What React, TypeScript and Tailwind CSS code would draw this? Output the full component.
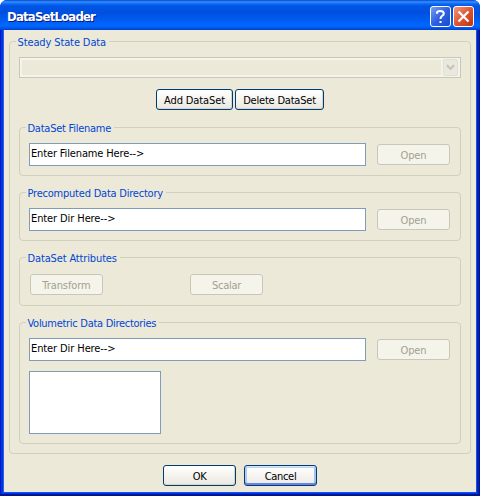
import type { ReactNode } from "react";

function Group({ title, className, tracking, children }: { title: string; className: string; tracking: string; children: ReactNode }) {
  return (
    <section className={`flex flex-col rounded-[4px] border border-[#d0d0bf] ${className}`}>
      <div className="-mt-[7px] flex h-[14px] shrink-0 pl-[6px]">
        <span className={`whitespace-nowrap bg-[#ece9d8] pl-[1.5px] pr-[3px] leading-[15px] text-[#0046d5] ${tracking}`}>{title}</span>
      </div>
      {children}
    </section>
  );
}

function XpButton({ label, width = "w-[73px]", focused = false, disabled = false, tracking = "" }: { label: string; width?: string; focused?: boolean; disabled?: boolean; tracking?: string }) {
  const look = disabled
    ? "border-[#c9c7ba] bg-[#f5f4ea] text-[#a1a192]"
    : focused
      ? "border-[#003c74] bg-linear-to-b from-white to-[#eceae3] text-black shadow-[inset_0_1px_0_#cee7ff,inset_0_-2px_0_#6982ee,inset_2px_0_0_#b1cbf5,inset_-2px_0_0_#a5c0f2,inset_0_2px_0_#bcd4f6]"
      : "border-[#003c74] bg-linear-to-b from-white via-[#f5f4ef] to-[#e9e7df] text-black shadow-[inset_-1px_-1px_0_#d9d4ca]";
  return (
    <button disabled={disabled} className={`flex h-[21px] shrink-0 items-start justify-center whitespace-nowrap rounded-[3px] border pt-[3px] leading-[15px] ${width} ${look} ${tracking}`}>
      {label}
    </button>
  );
}

function PathRow({ text, tracking }: { text: string; tracking: string }) {
  return (
    <div className="mt-[8px] flex items-center gap-[11px] pl-[9px]">
      <div className={`flex h-[23px] w-[337px] items-start whitespace-nowrap border border-[#7f9db9] bg-white pl-px pt-[2px] leading-[15px] text-black ${tracking}`}>{text}</div>
      <XpButton label="Open" disabled tracking="tracking-[-0.1px]" />
    </div>
  );
}

export default function App() {
  return (
    <div className="h-[496px] w-[480px] bg-white font-['DejaVu_Sans_Condensed','DejaVu_Sans',sans-serif] text-[11px] [font-stretch:condensed]">
      <div className="flex h-full flex-col overflow-hidden rounded-t-[7px] bg-[#0831d9]">
        <header className="flex h-[30px] shrink-0 items-start bg-[linear-gradient(180deg,#0046d0_0,#3c94ff_2px,#1674f7_3px,#0055e5_6px,#0050df_13px,#005cf2_20px,#0068ff_26px,#0058e8_28px,#003dce_30px)] pl-[7px] pr-[6px]">
          <h1 className="mt-[9px] flex-1 whitespace-nowrap text-[13px] font-bold leading-[16px] tracking-[-0.8px] text-white [text-shadow:1px_1px_0_#0a1883]">DataSetLoader</h1>
          <div className="mt-[6px] flex gap-[2px]">
            <button aria-label="Help" className="flex size-[21px] items-center justify-center rounded-[3px] border border-white bg-linear-to-br from-[#779df0] via-[#2f61df] to-[#194bd0]">
              <svg width="19" height="19" viewBox="0 0 19 19" fill="none" stroke="white" strokeWidth="2"><path d="M6 6.8V5.5Q6.5 4 9.3 4Q12.8 4 12.8 6.5Q12.8 8 11 9Q9.5 10 9.5 12" /><path d="M8.5 14h2v2h-2z" fill="white" stroke="none" /></svg>
            </button>
            <button aria-label="Close" className="flex size-[21px] items-center justify-center rounded-[3px] border border-white bg-linear-to-br from-[#ed967d] via-[#e05530] to-[#bd3308]">
              <svg width="19" height="19" viewBox="0 0 19 19" fill="none" stroke="white" strokeWidth="2.2"><path d="M4.5 4.5l10 10M14.5 4.5l-10 10" /></svg>
            </button>
          </div>
        </header>
        <div className="flex flex-1 border-x border-b-2 border-l-[#0019cf] border-r-[#00138c] border-b-[#001590] bg-[#0831d9]">
          <div className="flex flex-1 border-x-2 border-b border-l-[#0831d9] border-r-[#001eaf] border-b-[#0a2fe8]">
            <main className="flex flex-1 flex-col border-x border-b border-l-[#166aee] border-r-[#0855f5] border-b-[#0855f5] bg-[#ece9d8] pl-[5px] pt-[11px]">
              <Group title="Steady State Data" className="h-[413px] w-[462px]" tracking="tracking-[-0.12px]">
                <div className="ml-[9px] mt-[8px] flex h-[21px] w-[442px] shrink-0 border border-[#c9c7ba] bg-[#ece9d8] shadow-[inset_0_0_0_2px_#f5f4ea]">
                  <div className="flex-1" />
                  <div className="flex w-[19px] items-center justify-center border-2 border-[#f5f4ea] bg-[#f5f4ea]">
                    <div className="flex h-[17px] w-[15px] shrink-0 items-center justify-center rounded-[2px] border border-[#e0dfd2] bg-[#eae9df]">
                      <svg width="9" height="7" viewBox="0 0 9 7" fill="none" stroke="#c9c7ba" strokeWidth="2.4"><path d="M.8 1.2l3.7 3.6 3.7-3.6" /></svg>
                    </div>
                  </div>
                </div>
                <div className="mt-[11px] flex gap-[2px] pl-[146px]">
                  <XpButton label="Add DataSet" width="w-[77px]" tracking="tracking-[-0.12px]" />
                  <XpButton label="Delete DataSet" width="w-[89px]" tracking="tracking-[-0.2px]" />
                </div>
                <div className="mt-[17px] flex flex-col gap-[16px] pl-[9px]">
                  <Group title="DataSet Filename" className="h-[49px] w-[442px]" tracking="tracking-[-0.25px]">
                    <PathRow text="Enter Filename Here-->" tracking="tracking-[-0.14px]" />
                  </Group>
                  <Group title="Precomputed Data Directory" className="h-[49px] w-[442px]" tracking="tracking-[-0.22px]">
                    <PathRow text="Enter Dir Here-->" tracking="tracking-[-0.1px]" />
                  </Group>
                  <Group title="DataSet Attributes" className="h-[49px] w-[442px]" tracking="tracking-[-0.14px]">
                    <div className="mt-[9px] flex gap-[87px] pl-[10px]">
                      <XpButton label="Transform" disabled tracking="tracking-[-0.08px]" />
                      <XpButton label="Scalar" disabled tracking="tracking-[-0.3px]" />
                    </div>
                  </Group>
                  <Group title="Volumetric Data Directories" className="h-[122px] w-[442px]" tracking="tracking-[-0.29px]">
                    <PathRow text="Enter Dir Here-->" tracking="tracking-[-0.1px]" />
                    <div className="ml-[9px] mt-[10px] h-[63px] w-[132px] border border-[#7f9db9] bg-white" />
                  </Group>
                </div>
              </Group>
              <div className="mt-[11px] flex gap-[8px] pl-[154px]">
                <XpButton label="OK" tracking="tracking-[-0.3px]" />
                <XpButton label="Cancel" focused tracking="tracking-[-0.3px]" />
              </div>
            </main>
          </div>
        </div>
      </div>
    </div>
  );
}
